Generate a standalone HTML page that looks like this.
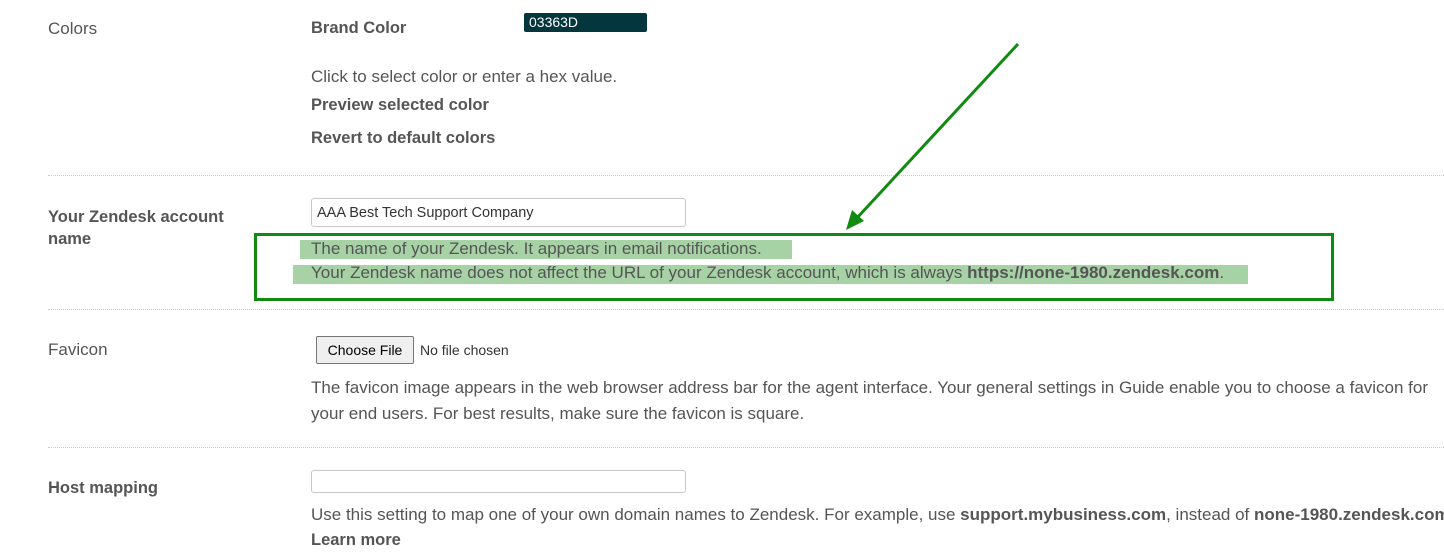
<!DOCTYPE html>
<html><head><style>
body{margin:0;width:1444px;height:556px;overflow:hidden;background:#fff;font-family:"Liberation Sans",sans-serif;color:#555;font-size:17px;position:relative}
.a{position:absolute;white-space:nowrap}
.b{font-weight:bold}
.bb{font-weight:bold;font-size:16.5px}
.sep{position:absolute;left:48px;right:0;border-top:1px dotted #ccc;height:0}
.inp{position:absolute;border:1px solid #c8c8c8;border-radius:3px;background:#fff;box-sizing:border-box}
.hl{position:absolute;background:#a6d2a6}
</style></head><body>
<div class="a" style="left:48px;top:19px;font-size:17px">Colors</div>
<div class="a bb" style="left:311px;top:19px">Brand Color</div>
<div class="a" style="left:524px;top:13px;width:123px;height:19px;background:#03363D;border-radius:2px;color:#fff;font-size:14px;line-height:19px;padding-left:5px;box-sizing:border-box">03363D</div>
<div class="a" style="left:311px;top:67px">Click to select color or enter a hex value.</div>
<div class="a bb" style="left:311px;top:96px">Preview selected color</div>
<div class="a bb" style="left:311px;top:129px">Revert to default colors</div>
<div class="sep" style="top:175px"></div>

<div class="a bb" style="left:48px;top:206px;line-height:22px">Your Zendesk account<br>name</div>
<div class="inp" style="left:311px;top:198px;width:375px;height:29px"></div>
<div class="a" style="left:317px;top:205px;font-size:14.5px;color:#333">AAA Best Tech Support Company</div>
<div class="hl" style="left:300px;top:240px;width:492px;height:19px"></div>
<div class="hl" style="left:293px;top:265px;width:955px;height:19px"></div>
<div class="a" style="left:311px;top:239px">The name of your Zendesk. It appears in email notifications.</div>
<div class="a" style="left:311px;top:263px">Your Zendesk name does not affect the URL of your Zendesk account, which is always <b>https://none-1980.zendesk.com</b>.</div>
<div class="a" style="left:254px;top:233px;width:1080px;height:68px;border:3px solid #108a10;box-sizing:border-box"></div>
<svg class="a" style="left:0;top:0" width="1444" height="556"><line x1="1018" y1="44" x2="856" y2="219" stroke="#108a10" stroke-width="3"/><polygon points="846,230 852,210 864,221" fill="#108a10"/></svg>
<div class="sep" style="top:309px"></div>

<div class="a" style="left:48px;top:340px;font-size:17px">Favicon</div>
<div class="a" style="left:316px;top:336px;width:98px;height:28px;border:1px solid #767676;border-radius:2px;background:#efefef;box-sizing:border-box;font-size:14px;color:#000;text-align:center;line-height:26px">Choose File</div>
<div class="a" style="left:420px;top:342px;font-size:14px;color:#333">No file chosen</div>
<div class="a" style="left:311px;top:375px;line-height:26px">The favicon image appears in the web browser address bar for the agent interface. Your general settings in Guide enable you to choose a favicon for<br>your end users. For best results, make sure the favicon is square.</div>
<div class="sep" style="top:447px"></div>

<div class="a bb" style="left:48px;top:479px">Host mapping</div>
<div class="inp" style="left:311px;top:470px;width:375px;height:23px"></div>
<div class="a" style="left:311px;top:505px">Use this setting to map one of your own domain names to Zendesk. For example, use <b>support.mybusiness.com</b>, instead of <b>none-1980.zendesk.com</b></div>
<div class="a bb" style="left:311px;top:531px">Learn more</div>
</body></html>
